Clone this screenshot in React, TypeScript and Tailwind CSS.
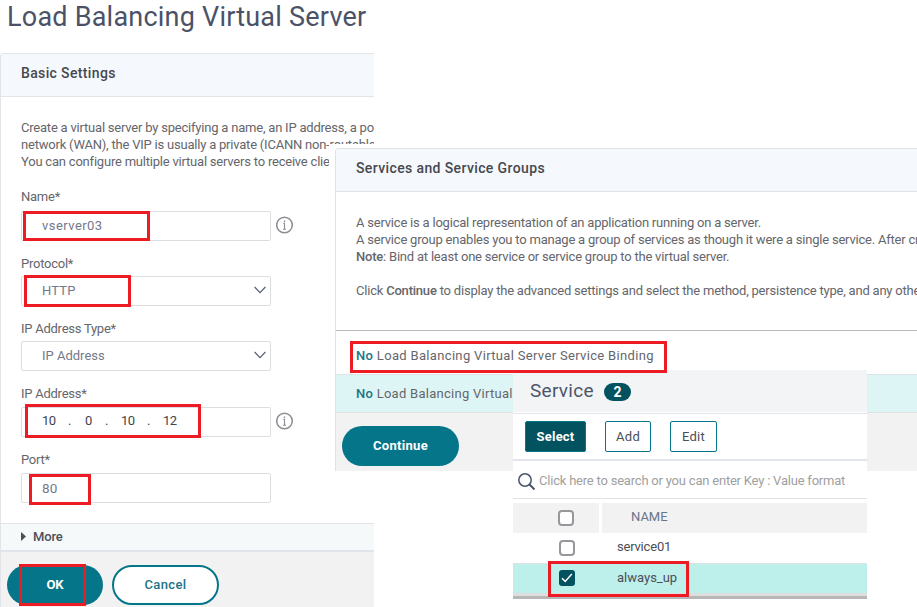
import type { ReactNode } from 'react';

function Mark({ className }: { className: string }) {
  return <span className={`pointer-events-none absolute border-3 border-[#ed1c24] ${className}`} />;
}

function Info() {
  return (
    <svg className="mb-0.5 ml-[5px] size-[18px] shrink-0" viewBox="0 0 18 18" fill="none" stroke="#8b8d92">
      <circle cx="8.5" cy="9" r="7.8" strokeWidth="1.5" />
      <path d="M7.2 7.2h1.3v6M7 13.2h3" strokeWidth="1.1" />
      <path d="M8.5 4.4v1.5" strokeWidth="1.4" />
    </svg>
  );
}

function Chevron() {
  return (
    <svg className="absolute right-1 top-2 h-2.5 w-3" viewBox="0 0 12 10" fill="none" stroke="#555e70" strokeWidth="1.2">
      <path d="M.6 2l5.4 5.6L11.4 2" />
    </svg>
  );
}

function Field({ label, className, select, info, children }: { label: string; className: string; select?: boolean; info?: boolean; children: ReactNode }) {
  return (
    <div className={`flex flex-col justify-between ${className}`}>
      <label className="h-4 pt-px leading-4 tracking-[-0.25px]">{label}</label>
      <div className="flex items-center">
        <div className="relative flex h-[30px] w-[250px] items-center rounded-xs border border-[#dcdde0] bg-white pl-5 tracking-[0.15px] text-[#74798a]">
          {children}
          {select && <Chevron />}
        </div>
        {info && <Info />}
      </div>
    </div>
  );
}

function BasicSettings() {
  return (
    <section className="relative flex h-[554px] w-[374px] flex-col overflow-hidden rounded-tl border-l border-t border-[#e1e4e8] text-[13px] text-[#65666b]">
      <h2 className="h-[43px] shrink-0 border-b border-[#e1e4e8] bg-[#f5f8fc] pl-5 pt-2.5 text-sm font-medium leading-[18px] tracking-[0.36px] text-[#46484f]">Basic Settings</h2>
      <div className="h-[426px] shrink-0 pl-5 pt-[22px]">
        <p className="h-[51px] whitespace-nowrap leading-[17px] tracking-[-0.21px]">
          Create a virtual server by specifying a name, an IP address, a po<br />
          network (WAN), the VIP is usually a private (ICANN non-routable<br />
          You can configure multiple virtual servers to receive clie
        </p>
        <Field label="Name*" className="mt-[18px] h-[53px]" info><span className="tracking-[0.45px]">vserver03</span></Field>
        <Field label="Protocol*" className="mt-3.5 h-[51px]" select>HTTP</Field>
        <Field label="IP Address Type*" className="mt-3.5 h-[51px]" select><span className="tracking-normal">IP Address</span></Field>
        <Field label="IP Address*" className="mt-3.5 h-[52px]" info>
          <div className="flex pb-[3px] tracking-normal text-[#41434e]">
            <span className="w-[26px] tracking-[-0.6px]">10</span><span className="w-[17px]">.</span>
            <span className="w-5">0</span><span className="w-4">.</span>
            <span className="w-[26px] tracking-[-0.6px]">10</span><span className="w-4">.</span><span className="tracking-[-0.6px]">12</span>
          </div>
        </Field>
        <Field label="Port*" className="mt-3.5 h-[52px]"><span className="text-[13.5px]">80</span></Field>
      </div>
      <div className="flex h-[29px] shrink-0 items-center border-b-2 border-t border-[#e1e4e8] bg-[#f5f9fa] pb-px pl-5 text-[13px] font-medium tracking-[-0.15px] text-[#4d5058]">
        <svg className="mr-[7px] h-[9px] w-[5px]" viewBox="0 0 5 9"><path d="M0 0l5 4.5L0 9z" fill="#4d4f55" /></svg>
        More
      </div>
      <div className="flex grow gap-[9px] bg-[#f2f2f2] pl-1.5 pt-[13px]">
        <button className="h-10 w-24 rounded-full bg-[#05768a] text-[13px] font-bold text-white">OK</button>
        <button className="h-10 w-[107px] rounded-full border-2 border-[#05768a] bg-white text-[13px] font-medium tracking-[0.4px] text-[#1b7486]">Cancel</button>
      </div>
    </section>
  );
}

function ServicesPanel() {
  return (
    <div className="absolute left-[329px] top-36 h-[327px] w-[588px] bg-white pl-1.5 pt-1">
      <section className="flex h-full flex-col overflow-hidden whitespace-nowrap rounded-tl border-l border-t border-[#e1e2e4] text-[13px] text-[#65666b]">
        <h2 className="h-[43px] shrink-0 border-b border-[#e1e2e4] bg-[#f5f8fc] pl-5 pt-2.5 text-sm font-medium leading-[18px] tracking-[0.38px] text-[#46484f]">Services and Service Groups</h2>
        <div className="h-[139px] shrink-0 border-b border-[#b9b9b9] pl-5 pt-[22px] leading-[17px] tracking-[-0.21px]">
          A service is a logical representation of an application running on a server.<br />
          A service group enables you to manage a group of services as though it were a single service. After cr<br />
          <b className="font-medium">Note</b>: Bind at least one service or service group to the virtual server.<br /><br />
          Click <b className="font-medium">Continue</b> to display the advanced settings and select the method, persistence type, and any othe
        </div>
        <div className="flex h-11 shrink-0 items-center border-b border-[#dfe3e5] pl-5 pt-1.5 tracking-[0.33px]">
          <p><b className="font-medium text-[#1b7486]">No</b> Load Balancing Virtual Server Service Binding</p>
        </div>
        <div className="flex h-[38px] shrink-0 items-center border-b border-[#dfe3e5] bg-[#def5f6] pl-5 tracking-[0.27px]">
          <p><b className="font-medium text-[#1b7486]">No</b> Load Balancing Virtual</p>
        </div>
        <div className="grow bg-[#f2f2f2] pl-1.5 pt-[13px]">
          <button className="h-10 w-[117px] rounded-full bg-[#05768a] text-[13px] font-bold tracking-[0.3px] text-white">Continue</button>
        </div>
      </section>
    </div>
  );
}

function Box({ checked }: { checked?: boolean }) {
  return checked ? (
    <svg className="mb-px size-4" viewBox="0 0 16 16">
      <rect width="16" height="16" rx="3" fill="#03525f" />
      <path d="M3 8.2l3.2 3.2L12.8 4" fill="none" stroke="#fff" strokeWidth="1.5" />
    </svg>
  ) : (
    <span className="size-4 rounded-[4px] border-2 border-[#96979a] bg-white" />
  );
}

function ServicePicker() {
  return (
    <section className="absolute left-[513px] top-[370px] flex h-[229px] w-[354px] flex-col bg-white text-[13px] text-[#4b4e58]">
      <header className="flex h-[42px] shrink-0 items-center bg-[#f3f4f6] pl-[17px]">
        <h2 className="text-[19px] leading-6 tracking-[0.3px] text-[#4d556b]">Service</h2>
        <span className="ml-2.5 mt-0.5 flex h-[18px] w-[27px] items-center justify-center rounded-full bg-[#03525f] text-sm font-bold text-white">2</span>
      </header>
      <div className="mt-px flex h-12 shrink-0 items-center border-b-2 border-t border-[#e2e6ea] pl-3">
        <button className="h-[31px] w-[61px] rounded-xs border border-[#05768a] bg-[#03525f] font-bold tracking-[0.2px] text-white">Select</button>
        <button className="ml-[19px] h-[31px] w-[46px] rounded-xs border border-[#05768a] tracking-[0.3px]">Add</button>
        <button className="ml-[19px] h-[31px] w-[47px] rounded-xs border border-[#05768a] tracking-[0.3px]">Edit</button>
      </div>
      <div className="flex h-[38px] shrink-0 items-center border-b border-[#e2e3e5] pl-[5px] tracking-[-0.21px] text-[#a0a0a0]">
        <svg className="mr-1 mt-1 size-[17px]" viewBox="0 0 17 17" fill="none" stroke="#48546c" strokeWidth="1.5">
          <circle cx="7" cy="7" r="6.2" />
          <path d="M11.5 11.5l5 5" strokeWidth="2" />
        </svg>
        <span className="pt-0.5">Click here to search or you can enter Key : Value format</span>
      </div>
      <div className="mt-1 flex h-[30px] shrink-0 gap-[3px] text-[#68758a]">
        <div className="flex w-[86px] items-center bg-[#f2f2f2] pl-[45px]"><Box /></div>
        <div className="flex grow items-center bg-[#f2f2f2] pb-0.5 pl-[29px]">NAME</div>
      </div>
      <div className="flex h-[31px] shrink-0 items-center border-b border-[#dfe3e5] pl-[46px]">
        <Box /><span className="ml-[42px] pb-0.5 tracking-[-0.2px]">service01</span>
      </div>
      <div className="flex h-[29px] shrink-0 items-center bg-[#bdefeb] pl-[46px]">
        <Box checked /><span className="ml-[42px] pb-0.5">always_up</span>
      </div>
      <div className="h-[3px] shrink-0 bg-[#dedede]" />
      <div className="h-[3px] shrink-0 bg-[#b7b7b7]" />
      <Mark className="left-[35px] top-[191px] h-9 w-[141px]" />
    </section>
  );
}

export default function App() {
  return (
    <main className="relative h-[607px] w-[917px] overflow-hidden bg-white font-['Roboto','Liberation_Sans',sans-serif]">
      <h1 className="h-[53px] pl-[7px] pt-px text-[27px] leading-8 tracking-[0.22px] text-[#4b5268]">Load Balancing Virtual Server</h1>
      <BasicSettings />
      <Mark className="left-[23px] top-[211px] h-[30px] w-[127px]" />
      <Mark className="left-6 top-[275px] h-8 w-[107px]" />
      <Mark className="left-[25px] top-[404px] h-[34px] w-44" />
      <Mark className="left-[29px] top-[474px] h-[31px] w-[62px]" />
      <Mark className="left-[19px] top-[564px] h-[42px] w-[67px]" />
      <ServicesPanel />
      <ServicePicker />
      <Mark className="left-[350px] top-[341px] h-8 w-[317px]" />
    </main>
  );
}
